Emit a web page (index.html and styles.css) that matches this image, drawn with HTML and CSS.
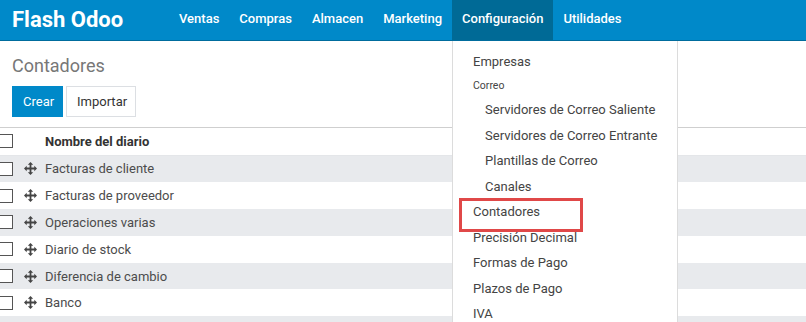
FILE: index.html
```html
<!DOCTYPE html>
<html lang="es">
<head>
<meta charset="utf-8">
<title>Contadores - Flash Odoo</title>
<link rel="stylesheet" href="styles.css">
</head>
<body>
<header class="navbar">
  <div class="brand">Flash Odoo</div>
  <nav class="menu">
    <a class="menu-item">Ventas</a>
    <a class="menu-item">Compras</a>
    <a class="menu-item">Almacen</a>
    <a class="menu-item">Marketing</a>
    <div class="menu-item active">Configuración
      <ul class="dropdown">
        <li class="dd-item">Empresas</li>
        <li class="dd-header">Correo</li>
        <li class="dd-item sub">Servidores de Correo Saliente</li>
        <li class="dd-item sub">Servidores de Correo Entrante</li>
        <li class="dd-item sub">Plantillas de Correo</li>
        <li class="dd-item sub">Canales</li>
        <li class="dd-item highlight">Contadores</li>
        <li class="dd-item">Precisión Decimal</li>
        <li class="dd-item">Formas de Pago</li>
        <li class="dd-item">Plazos de Pago</li>
        <li class="dd-item">IVA</li>
      </ul>
    </div>
    <a class="menu-item">Utilidades</a>
  </nav>
</header>
<main class="content">
  <div class="control-panel">
    <h1 class="title">Contadores</h1>
    <div class="buttons">
      <button class="btn btn-primary">Crear</button>
      <button class="btn btn-default">Importar</button>
    </div>
  </div>
  <div class="table">
    <div class="row head">
      <span class="check"></span>
      <span class="handle-space"></span>
      <span class="cell">Nombre del diario</span>
    </div>
    <div class="row odd"><span class="check"></span><svg class="handle" viewBox="0 0 13 13"><path d="M6.5 0 L9.2 2.7 H7.4 V5.6 H10.3 V3.8 L13 6.5 L10.3 9.2 V7.4 H7.4 V10.3 H9.2 L6.5 13 L3.8 10.3 H5.6 V7.4 H2.7 V9.2 L0 6.5 L2.7 3.8 V5.6 H5.6 V2.7 H3.8 Z"/></svg><span class="cell">Facturas de cliente</span></div>
    <div class="row"><span class="check"></span><svg class="handle" viewBox="0 0 13 13"><path d="M6.5 0 L9.2 2.7 H7.4 V5.6 H10.3 V3.8 L13 6.5 L10.3 9.2 V7.4 H7.4 V10.3 H9.2 L6.5 13 L3.8 10.3 H5.6 V7.4 H2.7 V9.2 L0 6.5 L2.7 3.8 V5.6 H5.6 V2.7 H3.8 Z"/></svg><span class="cell">Facturas de proveedor</span></div>
    <div class="row odd"><span class="check"></span><svg class="handle" viewBox="0 0 13 13"><path d="M6.5 0 L9.2 2.7 H7.4 V5.6 H10.3 V3.8 L13 6.5 L10.3 9.2 V7.4 H7.4 V10.3 H9.2 L6.5 13 L3.8 10.3 H5.6 V7.4 H2.7 V9.2 L0 6.5 L2.7 3.8 V5.6 H5.6 V2.7 H3.8 Z"/></svg><span class="cell">Operaciones varias</span></div>
    <div class="row"><span class="check"></span><svg class="handle" viewBox="0 0 13 13"><path d="M6.5 0 L9.2 2.7 H7.4 V5.6 H10.3 V3.8 L13 6.5 L10.3 9.2 V7.4 H7.4 V10.3 H9.2 L6.5 13 L3.8 10.3 H5.6 V7.4 H2.7 V9.2 L0 6.5 L2.7 3.8 V5.6 H5.6 V2.7 H3.8 Z"/></svg><span class="cell">Diario de stock</span></div>
    <div class="row odd"><span class="check"></span><svg class="handle" viewBox="0 0 13 13"><path d="M6.5 0 L9.2 2.7 H7.4 V5.6 H10.3 V3.8 L13 6.5 L10.3 9.2 V7.4 H7.4 V10.3 H9.2 L6.5 13 L3.8 10.3 H5.6 V7.4 H2.7 V9.2 L0 6.5 L2.7 3.8 V5.6 H5.6 V2.7 H3.8 Z"/></svg><span class="cell">Diferencia de cambio</span></div>
    <div class="row"><span class="check"></span><svg class="handle" viewBox="0 0 13 13"><path d="M6.5 0 L9.2 2.7 H7.4 V5.6 H10.3 V3.8 L13 6.5 L10.3 9.2 V7.4 H7.4 V10.3 H9.2 L6.5 13 L3.8 10.3 H5.6 V7.4 H2.7 V9.2 L0 6.5 L2.7 3.8 V5.6 H5.6 V2.7 H3.8 Z"/></svg><span class="cell">Banco</span></div>
    <div class="row odd short"></div>
  </div>
</main>
</body>
</html>
```
FILE: styles.css
```css
* { box-sizing: border-box; }
html, body { margin: 0; padding: 0; }
body {
  font-family: Roboto, "Liberation Sans", sans-serif;
  font-size: 13px;
  color: #4c4c4c;
  background: #fff;
  overflow: hidden;
  height: 322px;
}
.navbar {
  display: flex;
  align-items: stretch;
  height: 41px;
  background: #0089c9;
  border-bottom: 1px solid #006c9d;
}
.brand {
  color: #fff;
  font-weight: 700;
  font-size: 22px;
  padding-left: 12px;
  width: 169px;
  display: flex;
  align-items: center;
  padding-bottom: 2px;
}
.menu { display: flex; align-items: stretch; }
.menu-item {
  position: relative;
  color: #fff;
  font-weight: 500;
  font-size: 13px;
  padding: 0 10px;
  display: flex;
  align-items: center;
  padding-bottom: 3px;
}
.menu-item.active { background: #006a96; }
.dropdown {
  position: absolute;
  top: 41px;
  left: 0;
  width: 226px;
  margin: 0;
  padding: 8px 0 0;
  list-style: none;
  background: #fff;
  border: 1px solid #dcdcdc;
  border-top: none;
  height: 290px;
  z-index: 10;
  font-weight: 400;
}
.dd-item {
  color: #444;
  font-size: 13px;
  line-height: 19.5px;
  padding: 3px 20px;
  white-space: nowrap;
}
.dd-item.sub { padding-left: 32px; }
.dd-header {
  color: #444;
  font-size: 10.5px;
  line-height: 16.5px;
  padding: 3px 20px;
}
.dd-item.highlight {
  position: relative;
}
.dd-item.highlight::after {
  content: "";
  position: absolute;
  left: 6px;
  top: -1px;
  width: 118px;
  height: 28px;
  border: 3px solid #e04848;
}
.control-panel {
  padding: 12px 12px 0;
  height: 87px;
  border-bottom: 1px solid #cfcfcf;
}
.title {
  margin: 0;
  font-size: 18px;
  font-weight: 400;
  color: #777;
  line-height: 24px;
  height: 33px;
  padding-top: 1px;
}
.buttons { display: flex; gap: 3px; }
.btn {
  font-family: inherit;
  font-size: 13px;
  height: 31px;
  border-radius: 0;
  padding: 0 10px;
  cursor: pointer;
}
.btn-primary {
  background: #0089c9;
  color: #fff;
  border: 1px solid #0089c9;
  width: 51px;
}
.btn-default {
  background: #fff;
  color: #333;
  border: 1px solid #dcdfe3;
  width: 70px;
}
.row {
  display: flex;
  align-items: center;
  height: 26.8px;
  background: #fff;
}
.row.head { height: 27.5px; border-bottom: 1px solid #e4e6e9; }
.row.odd { background: #e8eaed; }
.row.short { height: 10px; }
.check {
  width: 14px;
  height: 14px;
  margin-left: -1px;
  border: 1px solid #555;
  background: #fff;
  flex: none;
}
.handle {
  width: 13px;
  height: 13px;
  margin-left: 11px;
  margin-right: 8px;
  fill: #444;
  flex: none;
}
.handle-space { width: 13px; margin-left: 11px; margin-right: 8px; }
.cell { color: #4c4c4c; white-space: nowrap; }
.row.head .cell { font-weight: 700; color: #333; }
```
